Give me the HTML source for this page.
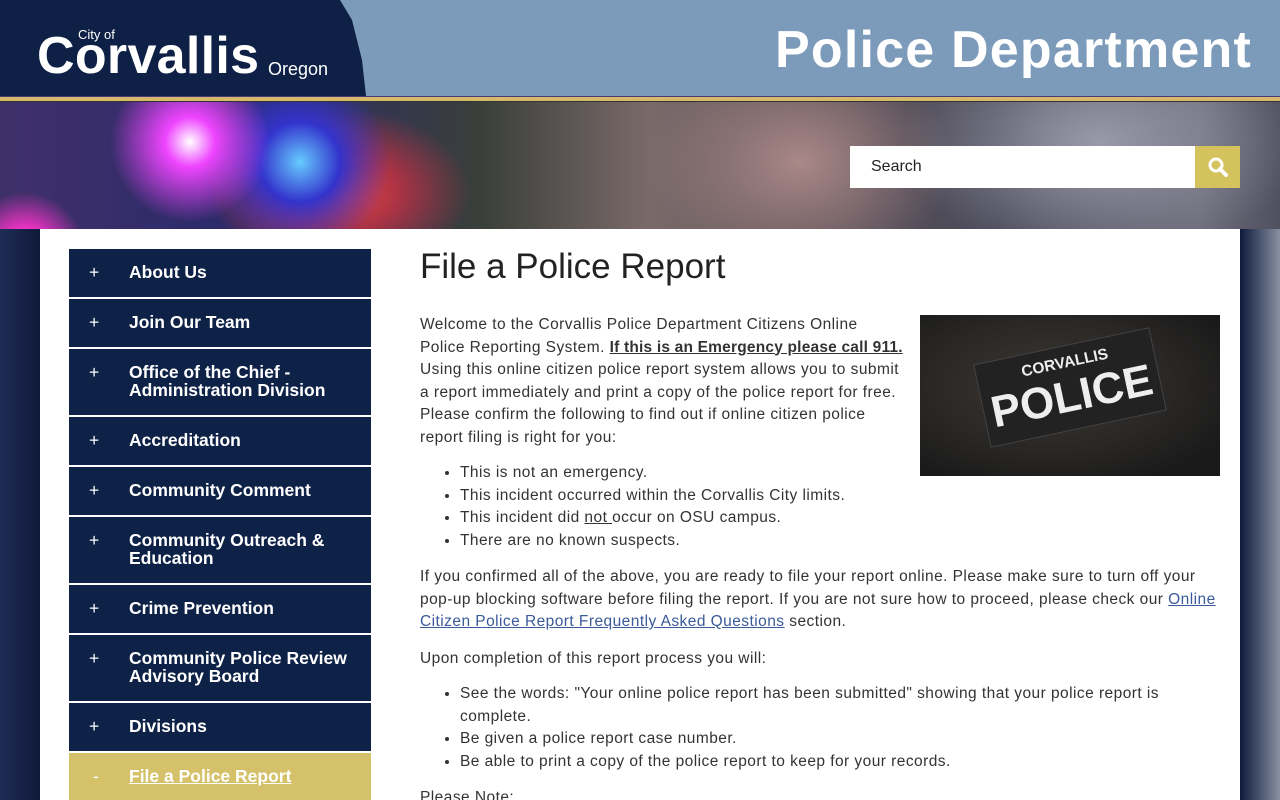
<!DOCTYPE html>
<html><head><meta charset="utf-8"><style>
*{margin:0;padding:0;box-sizing:border-box}
html,body{width:1280px;height:800px;overflow:hidden}
body{position:relative;font-family:"Liberation Sans",sans-serif;background:#1a2440}
.top{position:absolute;left:0;top:0;width:1280px;height:96px;background:#7c9aba}
.navy{position:absolute;left:0;top:0;width:370px;height:96px;background:#0e2045;clip-path:polygon(0 0,340px 0,352px 20px,362px 60px,366px 96px,0 96px)}
.cityof{position:absolute;left:78px;top:27px;color:#fff;font-size:13px}
.corv{position:absolute;left:37px;top:26px;color:#fff;font-size:52px;font-weight:bold;letter-spacing:0.3px}
.oreg{position:absolute;left:268px;top:59px;color:#fff;font-size:18px}
.pd{position:absolute;right:28px;top:20px;color:#fff;font-size:52px;font-weight:bold;letter-spacing:1.2px}
.gold{position:absolute;left:0;top:96px;width:1280px;height:6px;background:linear-gradient(#4a3a7a 0 1px,#d7b96a 1px 5px,#333 5px)}
.banner{position:absolute;left:0;top:102px;width:1280px;height:698px;background:
radial-gradient(circle at 25px 150px,#fff 0,#f3c 20px,transparent 60px),
radial-gradient(circle at 190px 40px,#fff 0,#e4f 25px,transparent 80px),
radial-gradient(circle at 300px 60px,#6cf 0,#33c 40px,transparent 90px),
radial-gradient(ellipse at 340px 90px,#e44 0,#a34 60px,transparent 130px),
radial-gradient(ellipse at 800px 60px,#a88 0,transparent 150px),
radial-gradient(ellipse at 1100px 40px,#99a 0,transparent 200px),
linear-gradient(90deg,#40306a 0,#2a2a6a 250px,#3a3f3a 480px,#7a6a6a 650px,#5a4f55 800px,#4a4a5a 1000px,#6a6a78 1200px,#505060 1280px)}
.banner2{position:absolute;left:0;top:229px;width:1280px;height:571px;background:linear-gradient(90deg,#1f2b55,#0f1a3a 40px,#0f1a3a 1240px,#4a5570 1260px,#8a90a0)}
.search{position:absolute;left:850px;top:146px;width:345px;height:42px;background:#fff;font-size:16px;color:#222;padding:12px 21px}
.sbtn{position:absolute;left:1195px;top:146px;width:45px;height:42px;background:#d4c35c}
.main{position:absolute;left:40px;top:229px;width:1200px;height:571px;background:#fff}
.nav{position:absolute;left:69px;top:249px;width:302px}
.nav div{background:#0e2147;color:#fff;font-size:17.5px;font-weight:bold;margin-bottom:2px;position:relative;padding:14px 10px 12px 60px;line-height:18px;min-height:48px}
.nav div:before{content:"+";position:absolute;left:20px;top:14px;font-weight:normal}
.nav .act{background:#d5c16a;text-decoration:underline}
.nav .act:before{content:"-";left:24px}
h1{position:absolute;left:420px;top:247px;font-size:35px;font-weight:normal;color:#222}
.c{position:absolute;left:420px;top:314px;width:800px;font-size:15.5px;line-height:22.5px;color:#333;letter-spacing:0.45px}
.c p{margin-bottom:14px}
.c ul{margin:-5px 0 14px 40px;padding-top:4px}
.img{float:right;width:300px;height:161px;margin:1px 0 10px 16px;background:radial-gradient(ellipse at 130px 70px,#3a3632 0,#2a2826 120px,#1a1a1a 200px);position:relative;overflow:hidden;letter-spacing:0}
.patch{position:absolute;left:60px;top:30px;width:180px;height:85px;background:#222;transform:rotate(-12deg);color:#eee;font-weight:bold;text-align:center;line-height:34px;border:1px solid #444}
a{color:#3a5a9a;text-decoration:underline}
</style></head><body>
<div class="top"></div>
<div class="navy"></div>
<div class="cityof">City of</div>
<div class="corv">Corvallis</div>
<div class="oreg">Oregon</div>
<div class="pd">Police Department</div>
<div class="gold"></div>
<div class="banner"></div>
<div class="banner2"></div>
<div class="search">Search</div>
<div class="sbtn"><svg width="45" height="42"><circle cx="21" cy="19" r="6" fill="none" stroke="#fff" stroke-width="3"/><path d="M25 23l6 6" stroke="#fff" stroke-width="4" stroke-linecap="round"/></svg></div>
<div class="main"></div>
<div class="nav">
<div>About Us</div>
<div>Join Our Team</div>
<div style="min-height:66px">Office of the Chief -<br>Administration Division</div>
<div>Accreditation</div>
<div>Community Comment</div>
<div style="min-height:66px">Community Outreach &amp;<br>Education</div>
<div>Crime Prevention</div>
<div style="min-height:66px">Community Police Review<br>Advisory Board</div>
<div>Divisions</div>
<div class="act">File a Police Report</div>
</div>
<h1>File a Police Report</h1>
<div class="c">
<div class="img"><div class="patch">CORVALLIS<br><span style="font-size:44px">POLICE</span></div></div>
<p>Welcome to the Corvallis Police Department Citizens Online Police Reporting System. <b style="white-space:nowrap;letter-spacing:0.2px"><u>If this is an Emergency please call 911.</u></b> Using this online citizen police report system allows you to submit a report immediately and print a copy of the police report for free. Please confirm the following to find out if online citizen police report filing is right for you:</p>
<ul><li>This is not an emergency.</li><li>This incident occurred within the Corvallis City limits.</li><li>This incident did <u>not </u>occur on OSU campus.</li><li>There are no known suspects.</li></ul>
<p>If you confirmed all of the above, you are ready to file your report online. Please make sure to turn off your pop-up blocking software before filing the report. If you are not sure how to proceed, please check our <a>Online Citizen Police Report Frequently Asked Questions</a> section.</p>
<p>Upon completion of this report process you will:</p>
<ul><li>See the words: "Your online police report has been submitted" showing that your police report is complete.</li><li>Be given a police report case number.</li><li>Be able to print a copy of the police report to keep for your records.</li></ul>
<p>Please Note:</p>
</div>
</body></html>
